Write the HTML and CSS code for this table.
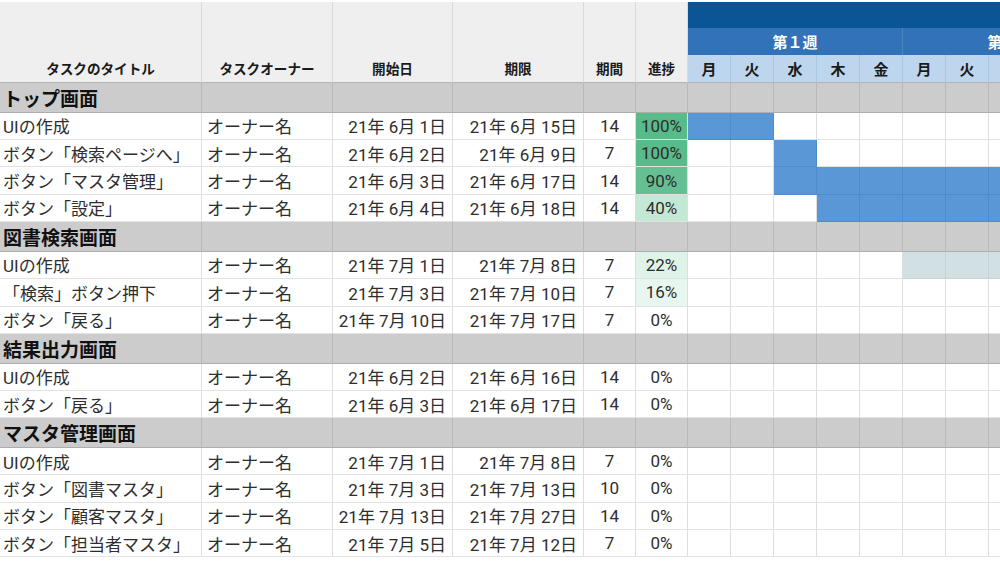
FILE: index.html
```html
<!DOCTYPE html>
<html lang="ja">
<head>
<meta charset="utf-8">
<title>ガントチャート</title>
<link rel="stylesheet" href="styles.css">
</head>
<body>
<div class="sheet">
  <div class="head">
    <div class="hcell">タスクのタイトル</div>
    <div class="hcell">タスクオーナー</div>
    <div class="hcell">開始日</div>
    <div class="hcell">期限</div>
    <div class="hcell">期間</div>
    <div class="hcell">進捗</div>
    <div class="band"></div>
    <div class="week">第１週</div>
    <div class="week">第２週</div>
    <div class="day">月</div><div class="day">火</div><div class="day">水</div><div class="day">木</div><div class="day">金</div>
    <div class="day">月</div><div class="day">火</div><div class="day">水</div><div class="day">木</div><div class="day">金</div>
  </div>

  <div class="row section">
    <div class="cell title">トップ画面</div><div class="cell"></div><div class="cell"></div><div class="cell"></div><div class="cell"></div><div class="cell"></div>
    <div class="g"></div><div class="g"></div><div class="g"></div><div class="g"></div><div class="g"></div><div class="g"></div><div class="g"></div><div class="g"></div><div class="g"></div><div class="g"></div>
  </div>
  <div class="row">
    <div class="cell name">UIの作成</div><div class="cell owner">オーナー名</div><div class="cell date">21年 6月 1日</div><div class="cell date">21年 6月 15日</div><div class="cell num">14</div><div class="cell num p100">100%</div>
    <div class="g bar"></div><div class="g bar"></div><div class="g"></div><div class="g"></div><div class="g"></div><div class="g"></div><div class="g"></div><div class="g"></div><div class="g"></div><div class="g"></div>
  </div>
  <div class="row">
    <div class="cell name">ボタン「検索ページへ」</div><div class="cell owner">オーナー名</div><div class="cell date">21年 6月 2日</div><div class="cell date">21年 6月 9日</div><div class="cell num">7</div><div class="cell num p100">100%</div>
    <div class="g"></div><div class="g"></div><div class="g bar"></div><div class="g"></div><div class="g"></div><div class="g"></div><div class="g"></div><div class="g"></div><div class="g"></div><div class="g"></div>
  </div>
  <div class="row">
    <div class="cell name">ボタン「マスタ管理」</div><div class="cell owner">オーナー名</div><div class="cell date">21年 6月 3日</div><div class="cell date">21年 6月 17日</div><div class="cell num">14</div><div class="cell num p90">90%</div>
    <div class="g"></div><div class="g"></div><div class="g bar"></div><div class="g bar"></div><div class="g bar"></div><div class="g bar"></div><div class="g bar"></div><div class="g bar"></div><div class="g bar"></div><div class="g bar"></div>
  </div>
  <div class="row">
    <div class="cell name">ボタン「設定」</div><div class="cell owner">オーナー名</div><div class="cell date">21年 6月 4日</div><div class="cell date">21年 6月 18日</div><div class="cell num">14</div><div class="cell num p40">40%</div>
    <div class="g"></div><div class="g"></div><div class="g"></div><div class="g bar"></div><div class="g bar"></div><div class="g bar"></div><div class="g bar"></div><div class="g bar"></div><div class="g bar"></div><div class="g bar"></div>
  </div>

  <div class="row section">
    <div class="cell title">図書検索画面</div><div class="cell"></div><div class="cell"></div><div class="cell"></div><div class="cell"></div><div class="cell"></div>
    <div class="g"></div><div class="g"></div><div class="g"></div><div class="g"></div><div class="g"></div><div class="g"></div><div class="g"></div><div class="g"></div><div class="g"></div><div class="g"></div>
  </div>
  <div class="row">
    <div class="cell name">UIの作成</div><div class="cell owner">オーナー名</div><div class="cell date">21年 7月 1日</div><div class="cell date">21年 7月 8日</div><div class="cell num">7</div><div class="cell num p22">22%</div>
    <div class="g"></div><div class="g"></div><div class="g"></div><div class="g"></div><div class="g"></div><div class="g soft"></div><div class="g soft"></div><div class="g soft"></div><div class="g soft"></div><div class="g soft"></div>
  </div>
  <div class="row">
    <div class="cell name">「検索」ボタン押下</div><div class="cell owner">オーナー名</div><div class="cell date">21年 7月 3日</div><div class="cell date">21年 7月 10日</div><div class="cell num">7</div><div class="cell num p16">16%</div>
    <div class="g"></div><div class="g"></div><div class="g"></div><div class="g"></div><div class="g"></div><div class="g"></div><div class="g"></div><div class="g"></div><div class="g"></div><div class="g"></div>
  </div>
  <div class="row">
    <div class="cell name">ボタン「戻る」</div><div class="cell owner">オーナー名</div><div class="cell date">21年 7月 10日</div><div class="cell date">21年 7月 17日</div><div class="cell num">7</div><div class="cell num">0%</div>
    <div class="g"></div><div class="g"></div><div class="g"></div><div class="g"></div><div class="g"></div><div class="g"></div><div class="g"></div><div class="g"></div><div class="g"></div><div class="g"></div>
  </div>

  <div class="row section">
    <div class="cell title">結果出力画面</div><div class="cell"></div><div class="cell"></div><div class="cell"></div><div class="cell"></div><div class="cell"></div>
    <div class="g"></div><div class="g"></div><div class="g"></div><div class="g"></div><div class="g"></div><div class="g"></div><div class="g"></div><div class="g"></div><div class="g"></div><div class="g"></div>
  </div>
  <div class="row">
    <div class="cell name">UIの作成</div><div class="cell owner">オーナー名</div><div class="cell date">21年 6月 2日</div><div class="cell date">21年 6月 16日</div><div class="cell num">14</div><div class="cell num">0%</div>
    <div class="g"></div><div class="g"></div><div class="g"></div><div class="g"></div><div class="g"></div><div class="g"></div><div class="g"></div><div class="g"></div><div class="g"></div><div class="g"></div>
  </div>
  <div class="row">
    <div class="cell name">ボタン「戻る」</div><div class="cell owner">オーナー名</div><div class="cell date">21年 6月 3日</div><div class="cell date">21年 6月 17日</div><div class="cell num">14</div><div class="cell num">0%</div>
    <div class="g"></div><div class="g"></div><div class="g"></div><div class="g"></div><div class="g"></div><div class="g"></div><div class="g"></div><div class="g"></div><div class="g"></div><div class="g"></div>
  </div>

  <div class="row section">
    <div class="cell title">マスタ管理画面</div><div class="cell"></div><div class="cell"></div><div class="cell"></div><div class="cell"></div><div class="cell"></div>
    <div class="g"></div><div class="g"></div><div class="g"></div><div class="g"></div><div class="g"></div><div class="g"></div><div class="g"></div><div class="g"></div><div class="g"></div><div class="g"></div>
  </div>
  <div class="row">
    <div class="cell name">UIの作成</div><div class="cell owner">オーナー名</div><div class="cell date">21年 7月 1日</div><div class="cell date">21年 7月 8日</div><div class="cell num">7</div><div class="cell num">0%</div>
    <div class="g"></div><div class="g"></div><div class="g"></div><div class="g"></div><div class="g"></div><div class="g"></div><div class="g"></div><div class="g"></div><div class="g"></div><div class="g"></div>
  </div>
  <div class="row">
    <div class="cell name">ボタン「図書マスタ」</div><div class="cell owner">オーナー名</div><div class="cell date">21年 7月 3日</div><div class="cell date">21年 7月 13日</div><div class="cell num">10</div><div class="cell num">0%</div>
    <div class="g"></div><div class="g"></div><div class="g"></div><div class="g"></div><div class="g"></div><div class="g"></div><div class="g"></div><div class="g"></div><div class="g"></div><div class="g"></div>
  </div>
  <div class="row">
    <div class="cell name">ボタン「顧客マスタ」</div><div class="cell owner">オーナー名</div><div class="cell date">21年 7月 13日</div><div class="cell date">21年 7月 27日</div><div class="cell num">14</div><div class="cell num">0%</div>
    <div class="g"></div><div class="g"></div><div class="g"></div><div class="g"></div><div class="g"></div><div class="g"></div><div class="g"></div><div class="g"></div><div class="g"></div><div class="g"></div>
  </div>
  <div class="row">
    <div class="cell name">ボタン「担当者マスタ」</div><div class="cell owner">オーナー名</div><div class="cell date">21年 7月 5日</div><div class="cell date">21年 7月 12日</div><div class="cell num">7</div><div class="cell num">0%</div>
    <div class="g"></div><div class="g"></div><div class="g"></div><div class="g"></div><div class="g"></div><div class="g"></div><div class="g"></div><div class="g"></div><div class="g"></div><div class="g"></div>
  </div>
</div>
</body>
</html>
```

FILE: styles.css
```css
html, body {
  margin: 0;
  padding: 0;
  overflow: hidden;
  background: #ffffff;
}

body {
  padding-top: 2px;
  font-family: Roboto, "Noto Sans CJK JP", sans-serif;
  color: #2e2e2e;
}

.sheet {
  width: max-content;
}

.head,
.row {
  display: grid;
  grid-template-columns: 202px 131px 120px 131px 52px 52px repeat(10, 43px);
}

.head {
  grid-template-rows: 26px 27px 28px;
}

.hcell {
  grid-row: 1 / 4;
  background: #efefef;
  border-right: 1px solid #d9d9d9;
  border-bottom: 1px solid #b4b4b4;
  box-sizing: border-box;
  display: flex;
  align-items: flex-end;
  justify-content: center;
  padding-bottom: 4px;
  font-size: 13.6px;
  font-weight: 700;
  line-height: 17px;
  color: #1a1a1a;
}

.band {
  grid-row: 1;
  grid-column: 7 / -1;
  background: #0b5496;
}

.week {
  grid-row: 2;
  grid-column: span 5;
  background: #3172b9;
  border-right: 1px solid #4a84c2;
  box-sizing: border-box;
  color: #ffffff;
  font-size: 15px;
  font-weight: 700;
  display: flex;
  align-items: center;
  justify-content: center;
}

.day {
  grid-row: 3;
  background: #bdd6ee;
  border-right: 1px solid #a9c6e3;
  border-bottom: 1px solid #b4b4b4;
  box-sizing: border-box;
  font-size: 15px;
  font-weight: 700;
  color: #1a1a1a;
  display: flex;
  align-items: center;
  justify-content: center;
}

.row {
  height: 27.4px;
}

.row.section {
  height: 29.6px;
}

.cell,
.g {
  box-sizing: border-box;
  border-right: 1px solid #dedede;
  border-bottom: 1px solid #e2e2e2;
  font-size: 17px;
  display: flex;
  align-items: center;
  white-space: nowrap;
  overflow: hidden;
}

.section .cell,
.section .g {
  background: #cccccc;
  border-right-color: #b9b9b9;
  border-bottom: 1px solid #adadad;
}

.cell.title {
  font-size: 19px;
  font-weight: 700;
  color: #111111;
  padding-left: 3px;
}

.cell.name {
  padding-left: 3px;
}

.cell.owner {
  padding-left: 5px;
}

.cell.date {
  justify-content: flex-end;
  padding-right: 6px;
}

.cell.num {
  justify-content: center;
}

.p100 { background: #57bb8a; }
.p90 { background: #64c093; }
.p40 { background: #c3e8d5; }
.p22 { background: #e0f3e9; }
.p16 { background: #e7f6ee; }

.g.bar {
  background: #5a97d6;
  border-right-color: #4f8bc9;
  border-bottom-color: #4f8bc9;
}

.g.soft {
  background: #d0e0e3;
  border-right-color: #c3d5d9;
  border-bottom-color: #c3d5d9;
}
```
